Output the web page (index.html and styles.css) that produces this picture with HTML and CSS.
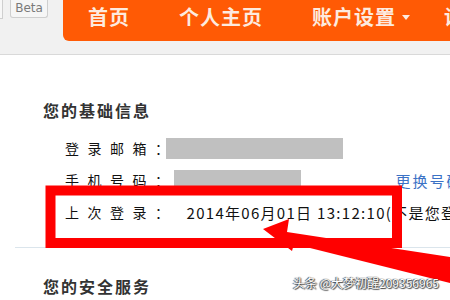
FILE: index.html
```html
<!DOCTYPE html>
<html lang="zh-CN">
<head>
<meta charset="utf-8">
<link rel="stylesheet" href="styles.css">
</head>
<body>
<div class="page">
  <header class="top">
    <div class="edge"></div>
    <div class="beta">Beta</div>
    <nav class="nav">
      <span class="item">首页</span>
      <span class="item">个人主页</span>
      <span class="item item-drop">账户设置<span class="caret"></span></span>
      <span class="item">设置</span>
    </nav>
  </header>
  <main class="content">
    <h2 class="heading">您的基础信息</h2>
    <div class="row">
      <span class="label">登录邮箱：</span>
      <span class="mask mask-email"></span>
    </div>
    <div class="row">
      <span class="label">手机号码：</span>
      <span class="mask mask-phone"></span>
      <span class="link">更换号码</span>
    </div>
    <div class="row">
      <span class="label">上次登录：</span>
      <span class="date">2014年06月01日 13:12:10(不是您登录的？</span>
    </div>
    <div class="divider"></div>
    <h2 class="heading heading-2">您的安全服务</h2>
  </main>
  <svg class="annot" width="450" height="300" viewBox="0 0 450 300">
    <rect x="50.5" y="190.5" width="346.5" height="52.5" fill="none" stroke="#ff0000" stroke-width="10"/>
    <polygon points="263,229 289,219 287,232 450,257 450,283 294,244 292,251" fill="#ff0000"/>
  </svg>
  <div class="watermark">头条 @大梦初醒209356965</div>
</div>
</body>
</html>
```

FILE: styles.css
```css
html, body {
  margin: 0;
  padding: 0;
  background: #ffffff;
}
.page {
  position: relative;
  width: 450px;
  height: 300px;
  overflow: hidden;
  font-family: "Noto Sans CJK SC", "Noto Sans", sans-serif;
  color: #222222;
}
.top {
  display: flex;
  align-items: flex-start;
  height: 54px;
  background: #f1f1f1;
  border-bottom: 1px solid #d9d9d9;
}
.edge {
  flex-shrink: 0;
  width: 2px;
  height: 18px;
  border-right: 1px solid #cfcfcf;
  border-bottom: 1px solid #cfcfcf;
  background: #f7f7f7;
}
.beta {
  flex-shrink: 0;
  margin-left: 7px;
  width: 38px;
  height: 18px;
  box-sizing: border-box;
  border: 1px solid #cfcfcf;
  border-top: none;
  border-radius: 0 0 3px 3px;
  background: #f6f6f6;
  color: #7a7a7a;
  font-family: "DejaVu Sans", sans-serif;
  font-size: 12px;
  line-height: 16px;
  text-align: center;
}
.nav {
  margin-left: 15px;
  flex: 1;
  min-width: 0;
  overflow: hidden;
  height: 41px;
  box-sizing: border-box;
  background: #ff5a05;
  border-radius: 0 0 0 6px;
  display: flex;
  align-items: flex-start;
  padding-left: 25px;
  padding-top: 5px;
  white-space: nowrap;
}
.item {
  flex-shrink: 0;
  color: #fdeadf;
  font-size: 20px;
  font-weight: 700;
  letter-spacing: 1px;
  line-height: 24px;
  margin-right: 49px;
  display: flex;
  align-items: center;
}
.item-drop {
  margin-right: 34px;
}
.caret {
  display: inline-block;
  margin-left: 6px;
  width: 0;
  height: 0;
  border-left: 4px solid transparent;
  border-right: 4px solid transparent;
  border-top: 5px solid #fdeadf;
}
.content {
  padding-left: 43px;
  padding-top: 45px;
}
.heading {
  margin: 0;
  font-size: 16px;
  font-weight: 700;
  letter-spacing: 2px;
  line-height: 20px;
  color: #333333;
}
.row {
  display: flex;
  align-items: center;
  height: 32px;
  padding-left: 22px;
  white-space: nowrap;
}
.row > * {
  flex-shrink: 0;
}
.heading + .row {
  margin-top: 12px;
}
.label {
  font-size: 14px;
  letter-spacing: 8.5px;
  color: #111111;
}
.mask {
  display: inline-block;
  background: #c0c0c0;
}
.mask-email {
  width: 177px;
  height: 21px;
  margin-left: -12px;
}
.mask-phone {
  width: 127px;
  height: 21px;
  margin-left: -4px;
}
.link {
  margin-left: 95px;
  font-size: 15px;
  letter-spacing: 2px;
  color: #3b72c5;
}
.date {
  margin-left: 9px;
  font-size: 15px;
  letter-spacing: 1.3px;
  color: #111111;
}
.divider {
  margin-top: 19px;
  margin-left: -28px;
  height: 1px;
  background: #dbe5ec;
}
.heading-2 {
  margin-top: 28px;
}
.annot {
  position: absolute;
  left: 0;
  top: 0;
}
.watermark {
  position: absolute;
  left: 293px;
  top: 274px;
  font-size: 12px;
  line-height: 18px;
  color: #ffffff;
  text-shadow: 0 0 1px #333, 1px 1px 1px #444, -1px 0 1px #444;
  white-space: nowrap;
}
```
